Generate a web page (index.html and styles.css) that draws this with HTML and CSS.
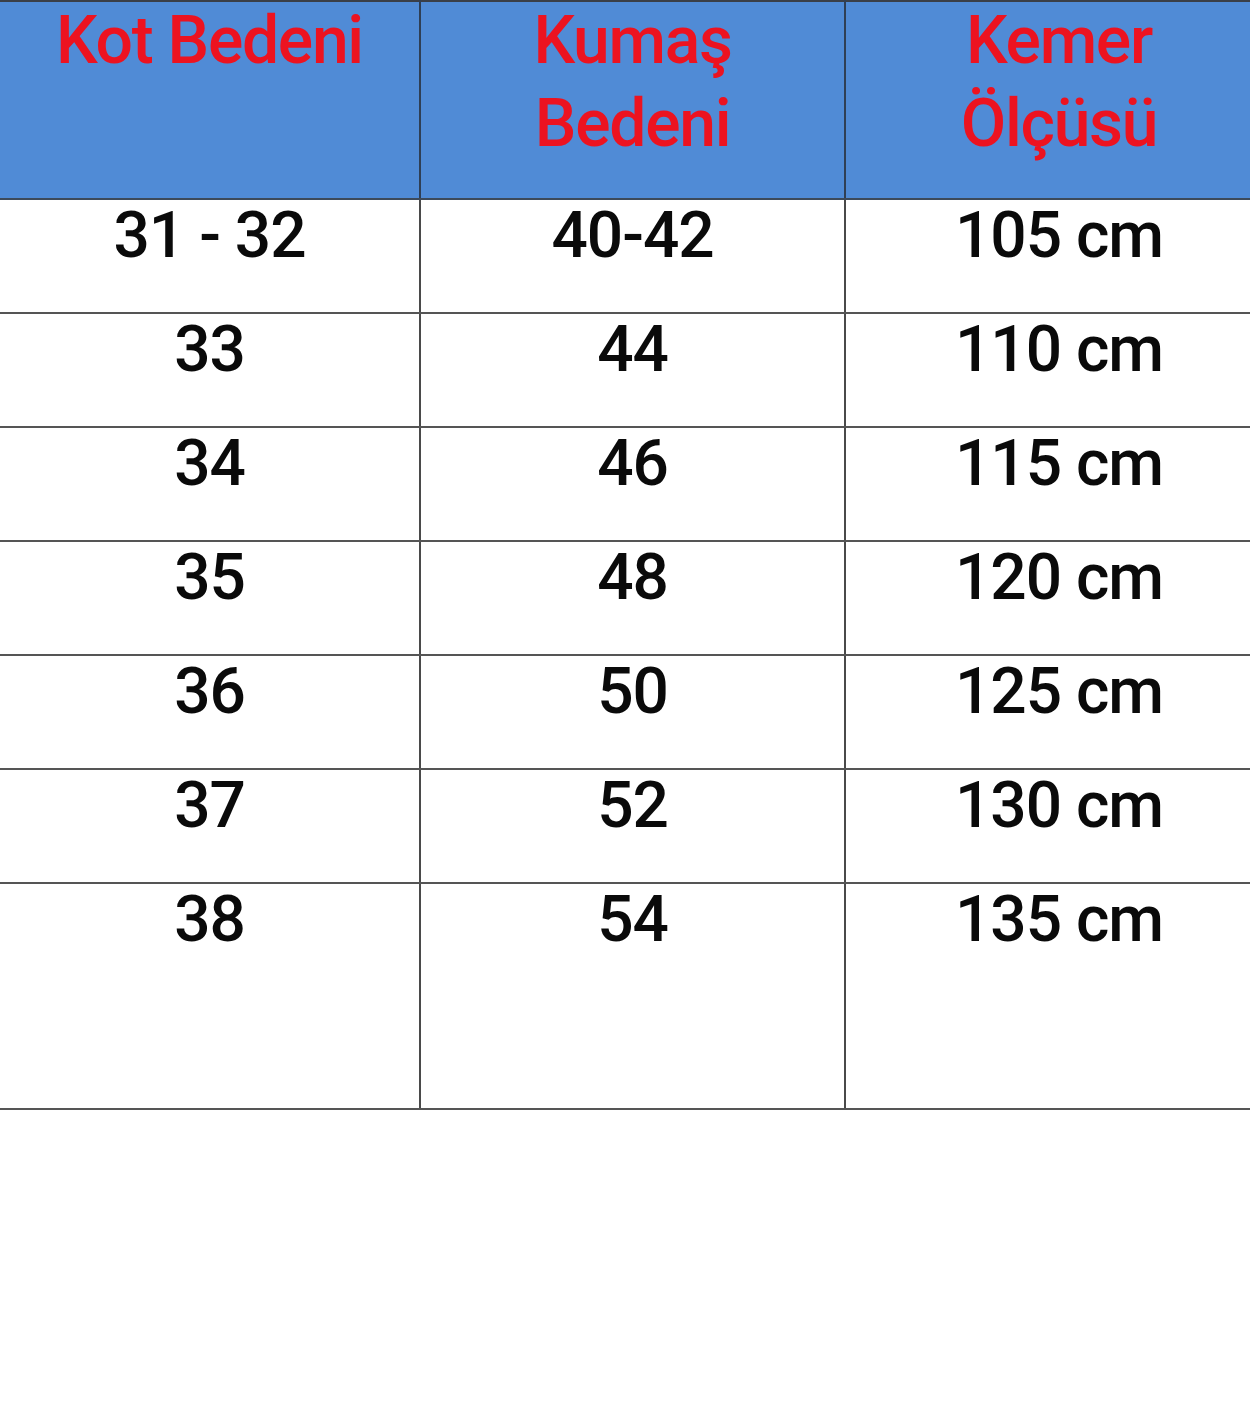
FILE: index.html
```html
<!DOCTYPE html>
<html lang="tr">
<head>
<meta charset="utf-8">
<title>Beden Tablosu</title>
<link rel="stylesheet" href="styles.css">
</head>
<body>
<div class="wrap">
<table class="size-table">
  <colgroup>
    <col class="c1"><col class="c2"><col class="c3">
  </colgroup>
  <thead>
    <tr>
      <th><div class="hd">Kot Bedeni</div></th>
      <th><div class="hd">Kumaş<br>Bedeni</div></th>
      <th><div class="hd">Kemer<br>Ölçüsü</div></th>
    </tr>
  </thead>
  <tbody>
    <tr><td>31 - 32</td><td>40-42</td><td>105 cm</td></tr>
    <tr><td>33</td><td>44</td><td>110 cm</td></tr>
    <tr><td>34</td><td>46</td><td>115 cm</td></tr>
    <tr><td>35</td><td>48</td><td>120 cm</td></tr>
    <tr><td>36</td><td>50</td><td>125 cm</td></tr>
    <tr><td>37</td><td>52</td><td>130 cm</td></tr>
    <tr class="last"><td>38</td><td>54</td><td>135 cm</td></tr>
  </tbody>
</table>
</div>
</body>
</html>
```
FILE: styles.css
```css
html, body {
  margin: 0;
  padding: 0;
  background: #ffffff;
}
body {
  width: 1250px;
  height: 1422px;
  overflow: hidden;
  font-family: Roboto, "Liberation Sans", sans-serif;
}
.wrap {
  width: 1250px;
  overflow: hidden;
}
.size-table {
  border-collapse: collapse;
  table-layout: fixed;
  width: 1272px;
  border-top: 2px solid #3a3f48;
}
.c1 { width: 420px; }
.c2 { width: 425px; }
.c3 { width: 427px; }
.size-table th,
.size-table td {
  padding: 0;
  text-align: center;
  vertical-align: top;
  border-left: 2px solid #4a4a4a;
  border-bottom: 2px solid #555555;
}
.size-table th:first-child,
.size-table td:first-child {
  border-left: none;
}
.size-table th {
  background: #508bd6;
  height: 196px;
  color: #ec1320;
  font-weight: 500;
  font-size: 66px;
  letter-spacing: -1.3px;
  border-bottom: 2px solid #3d4a5a;
}
.size-table th + th {
  border-left: 2px solid #2f3f55;
}
.hd {
  line-height: 83px;
  margin-top: -3px;
}
.size-table td {
  height: 112px;
  font-size: 64px;
  letter-spacing: -1px;
  font-weight: 500;
  color: #0a0a0a;
  line-height: 72px;
}
.size-table tr.last td {
  height: 224px;
}
```
